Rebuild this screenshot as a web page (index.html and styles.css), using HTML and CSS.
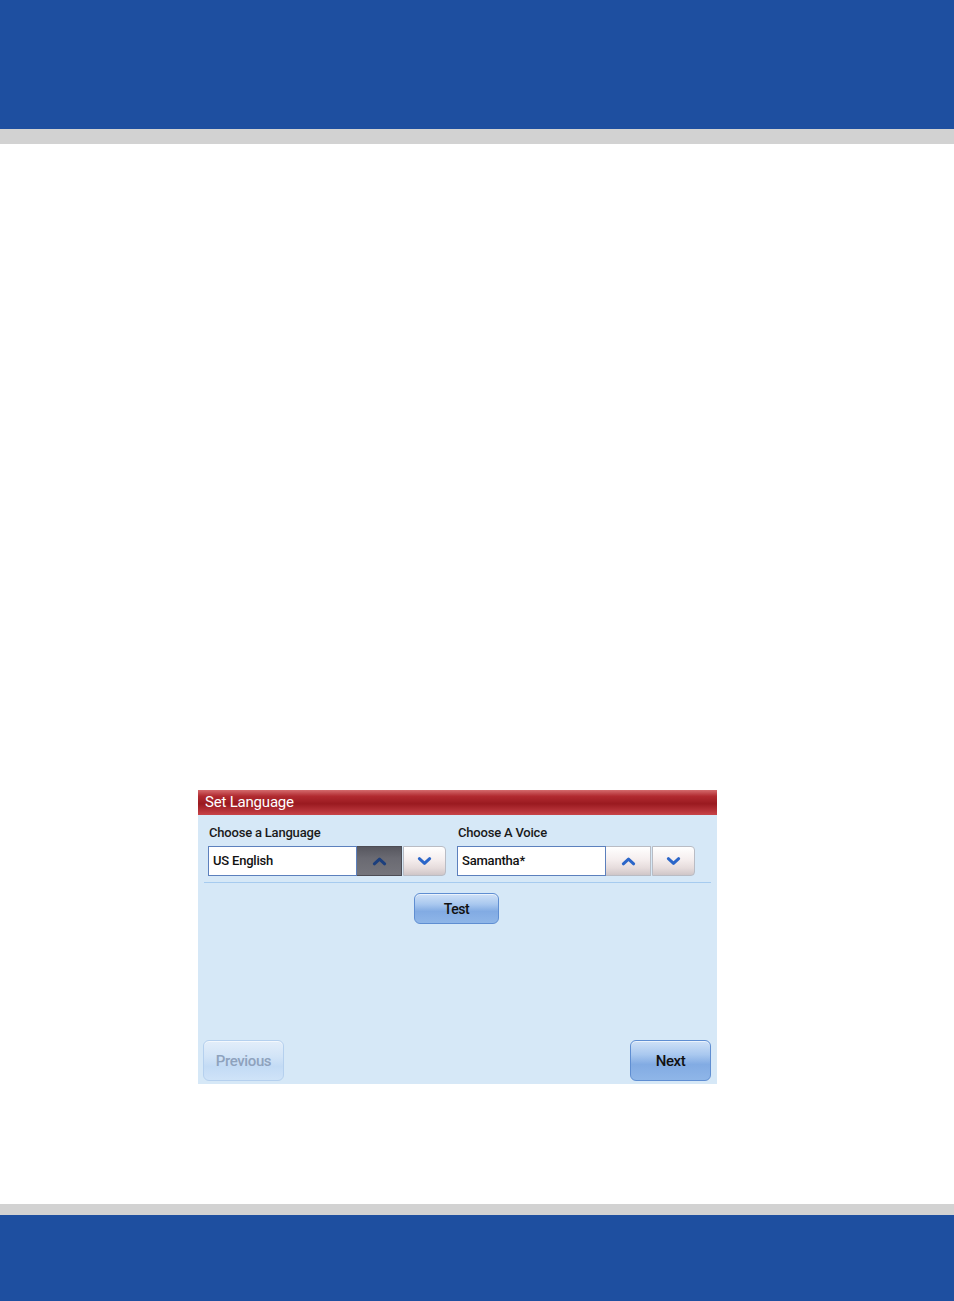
FILE: index.html
```html
<!DOCTYPE html>
<html>
<head>
<meta charset="utf-8">
<link rel="stylesheet" href="styles.css">
</head>
<body>
<div class="page">
  <header class="top-bar"></header>
  <div class="top-rule"></div>
  <main class="content">
    <section class="panel">
      <div class="panel-title">Set Language</div>
      <div class="panel-body">
        <div class="fields">
          <div class="field">
            <div class="field-label">Choose a Language</div>
            <div class="field-row">
              <div class="field-value">US English</div>
              <button class="spin spin-pressed"><svg viewBox="0 0 16 10" class="chev"><path d="M2.5 8 L8 3 L13.5 8" /></svg></button>
              <button class="spin spin-last"><svg viewBox="0 0 16 10" class="chev"><path d="M2.5 2.5 L8 7.5 L13.5 2.5" /></svg></button>
            </div>
          </div>
          <div class="field">
            <div class="field-label">Choose A Voice</div>
            <div class="field-row">
              <div class="field-value">Samantha*</div>
              <button class="spin"><svg viewBox="0 0 16 10" class="chev"><path d="M2.5 8 L8 3 L13.5 8" /></svg></button>
              <button class="spin spin-last"><svg viewBox="0 0 16 10" class="chev"><path d="M2.5 2.5 L8 7.5 L13.5 2.5" /></svg></button>
            </div>
          </div>
        </div>
        <div class="separator"></div>
        <div class="test-row"><button class="btn btn-test">Test</button></div>
        <div class="nav-row">
          <button class="btn btn-nav btn-disabled">Previous</button>
          <button class="btn btn-nav">Next</button>
        </div>
      </div>
    </section>
  </main>
  <div class="bottom-rule"></div>
  <footer class="bottom-bar"></footer>
</div>
</body>
</html>
```
FILE: styles.css
```css
html, body {
  margin: 0;
  padding: 0;
  background: #ffffff;
}
.page {
  width: 954px;
  height: 1301px;
  display: flex;
  flex-direction: column;
  font-family: Roboto, "Liberation Sans", sans-serif;
}
.top-bar {
  height: 129px;
  background: #1e4fa0;
}
.top-rule {
  height: 15px;
  background: #d2d2d2;
}
.content {
  flex: 1;
  padding-top: 646px;
  padding-left: 198px;
}
.bottom-rule {
  height: 11px;
  background: #d2d2d2;
}
.bottom-bar {
  height: 86px;
  background: #1e4fa0;
}
.panel {
  width: 519px;
  height: 294px;
  display: flex;
  flex-direction: column;
  background: #d6e8f7;
}
.panel-title {
  height: 25px;
  box-sizing: border-box;
  padding-left: 7px;
  line-height: 24px;
  color: #ffffff;
  font-size: 15px;
  letter-spacing: -0.2px;
  background: linear-gradient(to bottom, #d46a6c 0%, #b12a30 25%, #9a1a20 55%, #b8343a 85%, #c84448 100%);
}
.panel-body {
  flex: 1;
  display: flex;
  flex-direction: column;
}
.fields {
  display: flex;
  gap: 11px;
  padding: 9px 0 0 10px;
}
.field-label {
  font-size: 13px;
  font-weight: 500;
  color: #1a1a1a;
  height: 22px;
  line-height: 17px;
  padding-left: 1px;
  letter-spacing: -0.2px;
}
.field-row {
  display: flex;
  height: 30px;
}
.field-value {
  width: 149px;
  box-sizing: border-box;
  border: 1px solid #5c80bd;
  background: #ffffff;
  font-size: 13px;
  font-weight: 500;
  color: #111;
  padding-left: 4px;
  line-height: 27px;
  letter-spacing: -0.2px;
}
.spin {
  width: 45px;
  height: 30px;
  box-sizing: border-box;
  border: 1px solid #b9bcc4;
  border-left: none;
  padding: 0;
  margin: 0;
  background: linear-gradient(to bottom, #ffffff 0%, #f5eeee 45%, #e6dcdc 75%, #cfc6c8 100%);
  display: flex;
  align-items: center;
  justify-content: center;
}
.spin-last {
  width: 43px;
  margin-left: 1px;
  border-left: 1px solid #b9bcc4;
  border-radius: 0 4px 4px 0;
}
.spin-pressed {
  background: linear-gradient(to bottom, #57575f 0%, #6a6a72 40%, #75757c 100%);
  border-color: #4d4d55;
}
.chev {
  width: 15px;
  height: 10px;
  fill: none;
  stroke: #2b66c9;
  stroke-width: 3.2;
  stroke-linecap: round;
  stroke-linejoin: round;
}
.spin-pressed .chev {
  stroke: #1c3f7d;
}
.separator {
  height: 1px;
  background: #a6cbef;
  margin: 6px 6px 0 6px;
}
.test-row {
  display: flex;
  padding: 10px 0 0 216px;
}
.btn {
  font-family: inherit;
  font-weight: 500;
  color: #111;
  padding: 0;
  box-sizing: border-box;
  border: 1px solid #5f8ed2;
  background: linear-gradient(to bottom, #cfe1f7 0%, #a9c8ef 35%, #82abe3 60%, #8fb6e8 100%);
  box-shadow: inset 0 1px 0 rgba(255,255,255,0.6);
  letter-spacing: -0.4px;
}
.btn-test {
  width: 85px;
  height: 31px;
  border-radius: 6px;
  font-size: 14px;
}
.nav-row {
  margin-top: auto;
  display: flex;
  justify-content: space-between;
  padding: 0 6px 3px 5px;
}
.btn-nav {
  width: 81px;
  height: 41px;
  border-radius: 6px;
  font-size: 15px;
}
.btn-disabled {
  color: #8ea2bd;
  border-color: #b5d0ee;
  background: linear-gradient(to bottom, #e3eefa 0%, #d2e4f7 40%, #c3dbf5 65%, #cfe3f8 100%);
}
```
